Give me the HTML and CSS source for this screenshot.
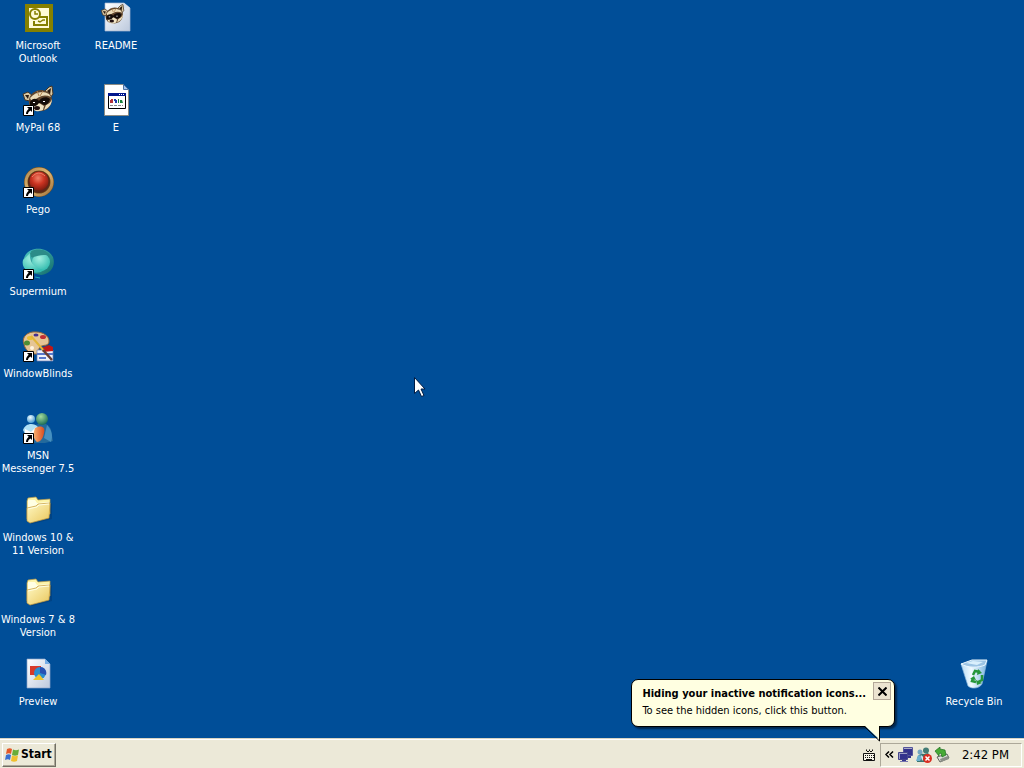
FILE: index.html
```html
<!DOCTYPE html>
<html lang="en">
<head>
<meta charset="utf-8">
<title>Desktop</title>
<link rel="stylesheet" href="styles.css">
</head>
<body>
<svg class="defs" aria-hidden="true">
  <defs>
    <linearGradient id="folder" x1="0" y1="0" x2="1" y2="1"><stop offset="0" stop-color="#fff9c4"/><stop offset="1" stop-color="#e9c65c"/></linearGradient>
    <linearGradient id="paper" x1="0" y1="0" x2="1" y2="1"><stop offset="0" stop-color="#fff"/><stop offset="1" stop-color="#bcc9dd"/></linearGradient>
    <radialGradient id="redball" cx=".45" cy=".35" r=".65"><stop offset="0" stop-color="#f08068"/><stop offset=".5" stop-color="#cc3422"/><stop offset="1" stop-color="#801c10"/></radialGradient>
    <linearGradient id="gold" x1="0" y1="0" x2="1" y2="1"><stop offset="0" stop-color="#b08850"/><stop offset=".5" stop-color="#e0b874"/><stop offset="1" stop-color="#a0703c"/></linearGradient>
    <linearGradient id="teal" x1="0" y1="0" x2="1" y2="1"><stop offset="0" stop-color="#4cc8c4"/><stop offset="1" stop-color="#136a68"/></linearGradient>
    <radialGradient id="aqua" cx=".4" cy=".3" r=".7"><stop offset="0" stop-color="#a4f0e0"/><stop offset="1" stop-color="#34bcb0"/></radialGradient>
    <radialGradient id="green" cx=".4" cy=".3" r=".7"><stop offset="0" stop-color="#a4dc9c"/><stop offset="1" stop-color="#1d6f58"/></radialGradient>
    <radialGradient id="sky" cx=".4" cy=".3" r=".7"><stop offset="0" stop-color="#f0fcff"/><stop offset="1" stop-color="#4c9cd0"/></radialGradient>
    <linearGradient id="orange" x1="0" y1="0" x2="1" y2="0"><stop offset="0" stop-color="#f8b070"/><stop offset="1" stop-color="#d84c20"/></linearGradient>
    <linearGradient id="bin" x1="0" y1="0" x2="1" y2="0"><stop offset="0" stop-color="#b8dcf4"/><stop offset=".4" stop-color="#f0faff"/><stop offset="1" stop-color="#7cb4e0"/></linearGradient>
    <symbol id="arrow" viewBox="0 0 11 11"><path fill="#fff" stroke="#000" d="M.5.5h10v10H.5z"/><path d="M4 2h5v5L7.500 5.500C6 6.500 5 7.500 5 9H3C3 7 4 5.500 5.700 3.800z"/></symbol>
    <symbol id="raccoon" viewBox="0 0 32 32">
      <path fill="#d8c8a4" stroke="#443424" d="M23 7 27 3l3-1 1 8-3 4zM1 10l5-2 5 4-3 5-5-1z"/>
      <path fill="#2c1c10" d="M25 7l4-3-1 7zM3 11l4 0-1 4z"/>
      <path fill="#60452c" d="M7 16C8 9 16 4 24 7c6 3 7 8 5 13-2 5-7 8-13 7C9 27 6 21 7 16z"/>
      <path fill="#ecdcb8" d="M8 14c5-6 13-8 19-4l2 3c-7-3-12-1-19 5zM24 21c3-1 5-3 6-6 0 5-3 9-8 11z"/>
      <path fill="#140c08" d="M8 18c2-4 7-4 9-1 2-4 8-5 11-2-1 4-3 6-6 6l-4-2c0 5-7 6-10 3z"/>
      <path fill="#f0e4c4" d="M9 22c3 1 6 0 8-3l5 3-1 4c-4 2-10 2-12-4z"/><ellipse cx="15" cy="24" rx="3" ry="2" fill="#201010"/>
      <path fill="#fff" d="M11 18h2v1h-2zm10-1h2v1h-2z"/><path stroke="#b08454" fill="none" d="M15 7l2 5M21 7l-3 5"/>
    </symbol>
    <symbol id="folder-icon" viewBox="0 0 32 32">
      <path fill="#02386f" opacity=".5" d="M6 28l4 2 20-5V9z"/>
      <path fill="#fdf4a8" stroke="#b89848" stroke-width=".7" d="M5 7l1-3 8-1 2 3 12-1v15L5 25z"/>
      <path fill="#ffffe4" d="M6 6h7l2 3 12-1v4L6 14z"/>
      <path fill="url(#folder)" stroke="#c49a3c" stroke-width=".7" d="M5 14l9-2 2-2 12-1-1 15-19 5-3-2z"/>
      <path stroke="#fffde0" fill="none" d="M6 15l9-2 2-2 10-1"/>
    </symbol>
  </defs>
</svg>

<main class="desktop">
  <div class="column">
    <a class="item" href="#"><svg class="icon" viewBox="0 0 32 32"><path fill="#858000" d="M3 2h28v28H3z"/><path fill="#fffbd8" d="M7 6h20v20H7z"/><path fill="#fffbd8" stroke="#858000" stroke-width="2" d="M14 15h11v8H12v-4"/><circle cx="13" cy="12" r="5" fill="#fffbd8" stroke="#858000" stroke-width="2"/><path d="M13 9v3h3M16 19l2 1 3-2h2" fill="none" stroke="#858000" stroke-width="1.500"/></svg><span class="label">Microsoft<br>Outlook</span></a>
    <a class="item" href="#"><svg class="icon" viewBox="0 0 32 32"><use href="#raccoon"/><use href="#arrow" x="1" y="21" width="11" height="11"/></svg><span class="label">MyPal 68</span></a>
    <a class="item" href="#"><svg class="icon" viewBox="0 0 32 32"><circle cx="17" cy="16" r="15" fill="#74501c"/><circle cx="17" cy="16" r="13" fill="none" stroke="url(#gold)" stroke-width="3"/><circle cx="17" cy="16" r="11" fill="#5c2818"/><circle cx="17" cy="15" r="9.500" fill="url(#redball)"/><path fill="none" stroke="#f7a080" opacity=".7" d="M10 11c4-5 9-5 13-1"/><use href="#arrow" x="1" y="21" width="11" height="11"/></svg><span class="label">Pego</span></a>
    <a class="item" href="#"><svg class="icon" viewBox="0 0 32 32"><path fill="url(#teal)" d="M2 10C6-2 25-2 31 9c3 9-2 17-12 18L6 24C1 20 0 14 2 10z"/><path fill="#2c8c88" d="M8 5c7-5 17-4 21 4-7 2-13 2-20 0z"/><circle cx="19" cy="14" r="9" fill="url(#aqua)"/><path fill="#2c8c88" d="M9 3c6-3 16-2 20 6-6-4-13-1-18 0z"/><path fill="url(#aqua)" d="M1 12l7-7c-1 8 3 15 14 17-5 4-11 3-16 1C1 20 0 16 1 12z"/><path fill="none" stroke="#1aa8b8" d="M13 29l5 1"/><use href="#arrow" x="1" y="21" width="11" height="11"/></svg><span class="label">Supermium</span></a>
    <a class="item" href="#"><svg class="icon" viewBox="0 0 32 32"><path fill="#e5c595" stroke="#9c6838" d="M2 14C-1 7 6 1 14 2c7 0 13 4 13 9 0 6-6 3-9 6s1 7-4 7C8 24 3 20 2 14z"/><ellipse cx="5" cy="13" rx="3" ry="2.500" fill="#4c8c34"/><ellipse cx="8" cy="8" rx="3" ry="2" fill="#e8be34"/><ellipse cx="14" cy="5" rx="2.500" ry="1.500" fill="#443090"/><ellipse cx="21" cy="7" rx="3" ry="2" fill="#c02e34"/><ellipse cx="10" cy="18" rx="2" ry="2" fill="#fff4e0"/><path fill="#eef2fa" stroke="#7080b0" stroke-width=".7" d="M15 20h16v11H15z"/><path fill="#5878cc" d="M15 23h16v2H15zm2 4h7v2h-7z"/><path fill="#c01818" d="M19 18l8-3 4 2v4l-10 1z"/><path stroke="#e1b638" stroke-width="2" d="M9 6l13 15"/><path stroke="#643e34" stroke-width="2.500" d="M21 20l9 10"/><use href="#arrow" x="1" y="21" width="11" height="11"/></svg><span class="label">WindowBlinds</span></a>
    <a class="item" href="#"><svg class="icon" viewBox="0 0 32 32"><path fill="#236a9c" d="M12 14c7-5 15-3 17 4l2 11-8 2H12z"/><path fill="#4590c2" d="M25 13c5 5 6 11 4 17l-7-4z"/><path fill="#b0e0f4" d="M1 18c2-7 11-8 15-3v12L4 24z"/><path fill="#fff" d="M3 17l6 3 5-5-3 11-8-3z"/><path fill="url(#orange)" d="M13 16c5-3 11-2 9 5-1 6-4 9-7 9-4-3-4-9-2-14z"/><circle cx="9" cy="7" r="4" fill="url(#sky)"/><circle cx="20" cy="7" r="6" fill="url(#green)"/><use href="#arrow" x="1" y="21" width="11" height="11"/></svg><span class="label">MSN<br>Messenger 7.5</span></a>
    <a class="item" href="#"><svg class="icon" viewBox="0 0 32 32"><use href="#folder-icon"/></svg><span class="label">Windows 10 &amp;<br>11 Version</span></a>
    <a class="item" href="#"><svg class="icon" viewBox="0 0 32 32"><use href="#folder-icon"/></svg><span class="label">Windows 7 &amp; 8<br>Version</span></a>
    <a class="item" href="#"><svg class="icon" viewBox="0 0 32 32"><path fill="url(#paper)" stroke="#8ba4c8" stroke-width=".7" d="M5 1h18l5 5v24H5z"/><path fill="#75aee8" d="M23 1v5h5z"/><path fill="#d83a28" d="M8 8h11v9H8z"/><circle cx="18" cy="15" r="6" fill="#2a8ed0"/><path fill="#2752b4" d="M18 9a6 6 0 0 1 6 8l-6-2z"/><path fill="#edc62f" d="M17 16l5 6H11z"/></svg><span class="label">Preview</span></a>
  </div>
  <div class="column">
    <a class="item" href="#"><svg class="icon" viewBox="0 0 32 32"><path fill="url(#paper)" stroke="#a8b8d0" stroke-width=".7" d="M5 1h19l6 5v23H5z"/><path fill="#d4dfef" d="M24 1v5h6z"/><use href="#raccoon" x="0" y="1" width="25" height="24"/></svg><span class="label">README</span></a>
    <a class="item" href="#"><svg class="icon" viewBox="0 0 32 32"><path fill="#fff" stroke="#8b8b84" d="M4.500.5h19l5 5v26h-24z"/><path fill="#a0c2f0" stroke="#4b72a4" d="M23.500.5v5h5z"/><path fill="#fff" stroke="#000" d="M8.500 9.500h17v15h-17z"/><path fill="#00168c" d="M8 9h18v3H8z"/><path fill="#fff" d="M19 10h1v1h-1zm2 0h1v1h-1zm2 0h1v1h-1z"/><path fill="#b43038" d="M11 15h2v4h-3v-3h1z"/><path fill="#203cac" d="M14 15h2v1h1v3h-2v-2h-1z"/><path fill="#17803c" d="M18 15h1v4h-1zm2 1h2l1 3h-3z"/><path stroke="#888" stroke-dasharray="3 1" d="M10 21.500h13"/></svg><span class="label">E</span></a>
  </div>
  <div class="column column-end">
    <a class="item" href="#"><svg class="icon" viewBox="0 0 32 32"><path fill="url(#bin)" stroke="#8cb8dc" stroke-width=".7" d="M3 6l26-3-5 23c-3 5-11 5-14 2z"/><path fill="#9cc4e4" stroke="#eaf7ff" d="M3 6l11-4 15 0-2 5c-7 3-17 3-24-1z"/><path fill="#d9effc" d="M8 5l7-2 10 1-6 3z"/><path fill="none" stroke="#26963a" stroke-width="2.500" d="M15 17l2-4 5 1M24 17l0 5-4 2M18 24l-4-1 1-3"/><path fill="#26963a" d="M20 11l4 4-5 2zM24 25l-5 2-1-5zM12 21l4-3 2 4z"/></svg><span class="label">Recycle Bin</span></a>
  </div>
  <svg class="cursor" viewBox="0 0 12 20" aria-hidden="true"><path fill="#fff" stroke="#001c44" d="M.5.500v16l4-3.500 3 6.500 2.500-1-3-6.500H11z"/></svg>
</main>

<footer class="taskbar">
  <button class="start" type="button"><svg class="flag" viewBox="0 0 16 16" aria-hidden="true"><path fill="#e45828" d="M3 2q3-1.500 5 0L7 7q-2-1.500-5 0z"/><path fill="#68ac38" d="M9 2.500q3 1.500 6 0L14 8q-3 1.500-6 0z"/><path fill="#3a70d0" d="M2 8q3-1.500 5 0l-1 5q-2-1.500-5 0z"/><path fill="#f0bf2e" d="M8 8.500q3 1.500 6 0L13 14q-3 1.500-6 0z"/></svg>Start</button>
  <svg class="keyboard" viewBox="0 0 14 14" aria-hidden="true"><path fill="none" stroke="#111" d="M4.500 3V1.500M5 3.500h2M7.500 3V1.500M8 3.500h2M10.500 3V1.500"/><path fill="#f6f4e8" stroke="#111" d="M1.500 5.500h11v7h-11z"/><path stroke="#111" stroke-dasharray="1 1" d="M3 7.500h9M3 9.500h9"/><path stroke="#111" d="M4 11.500h6"/></svg>
  <div class="tray">
    <button class="expand" type="button" aria-label="Show hidden icons"><svg viewBox="0 0 9 7"><path fill="none" stroke="#000" stroke-width="1.500" d="M4 .5l-3 3 3 3M8 .5l-3 3 3 3"/></svg></button>
    <svg class="tray-icon" viewBox="0 0 16 16"><path fill="#aaabc8" stroke="#55559c" d="M5.500.500h9v8h-9z"/><path fill="#34338c" d="M6 2h8v6H6zM8 9h5v2H8z"/><path fill="#9c9dc5" stroke="#45458c" d="M.5 5.500h9v7h-9z"/><path fill="#34338c" d="M2 7h7v5H2zM4 13h4v1H4z"/><path fill="#7776ae" d="M2 14h8v1H2z"/></svg>
    <svg class="tray-icon" viewBox="0 0 16 16"><path fill="#39756f" d="M1 13C1 9 4 6 8 7l4-1 3 4-4 5H1z"/><path fill="#6db0cf" d="M2 8l5 1-3 5H0z"/><path fill="#d9e9ed" d="M5 8l3 3-2 3z"/><circle cx="4" cy="5" r="2.500" fill="#75a7c0"/><circle cx="10" cy="3.500" r="3" fill="#427c75"/><circle cx="11.500" cy="11.500" r="4.500" fill="#d92e20"/><path stroke="#fff" stroke-width="1.500" d="M9.500 9.500l4 4m0-4l-4 4"/></svg>
    <svg class="tray-icon" viewBox="0 0 16 16"><path fill="#e0e1dc" stroke="#62665f" d="M3 10l10-3 2 4-9 4z"/><path fill="#8c9088" d="M6 12l8-3 1 3-8 3z"/><path fill="#47aa35" stroke="#1d6e20" stroke-width=".7" d="M1 4l5-4v2l5 1 1 5-4 2-1-4-2 1v2z"/></svg>
    <time class="clock">2:42 PM</time>
  </div>
  <section class="balloon">
    <div class="balloon-text">
      <h2 class="balloon-title">Hiding your inactive notification icons...</h2>
      <p class="balloon-message">To see the hidden icons, click this button.</p>
    </div>
    <button class="close" type="button" aria-label="Close"><svg viewBox="0 0 9 9"><path stroke="#000" stroke-width="2" d="M.5.500l8 8m0-8l-8 8"/></svg></button>
    <svg class="tail" viewBox="0 0 18 16" aria-hidden="true"><path fill="#ffffe1" d="M1 0h15v14z"/><path fill="none" stroke="#000" d="M1 1l14.500 14V0"/></svg>
  </section>
</footer>
</body>
</html>
```
FILE: styles.css
```css
* {
  box-sizing: border-box;
}

body {
  margin: 0;
  min-height: 100vh;
  display: flex;
  flex-direction: column;
  background: #004e98;
  font-family: Tahoma, "DejaVu Sans Condensed", "DejaVu Sans", sans-serif;
  font-size: 11px;
  line-height: 13px;
  color: #000;
}

button {
  font: inherit;
  color: inherit;
}

svg {
  display: block;
  flex: none;
}

.defs {
  position: absolute;
  width: 0;
  height: 0;
}

.desktop {
  flex: 1;
  display: flex;
  position: relative;
}

.column {
  width: 78px;
  display: grid;
  grid-auto-rows: 82px;
  align-content: start;
}

.column-end {
  margin-left: auto;
  margin-right: 10px;
  align-content: end;
}

.item {
  display: flex;
  flex-direction: column;
  align-items: center;
  gap: 5px;
  padding: 2px 2px 0 0;
  color: #fff;
  text-align: center;
  text-decoration: none;
}

.icon {
  width: 32px;
  height: 32px;
}

.label {
  white-space: nowrap;
}

.cursor {
  position: absolute;
  left: 414px;
  top: 377px;
  width: 12px;
  height: 20px;
}

.taskbar {
  position: relative;
  display: flex;
  align-items: center;
  height: 30px;
  padding: 2px 2px 0;
  background: #ece9d8;
  border-top: 1px solid #d8d4c4;
  box-shadow: inset 0 1px #fff;
}

.start {
  display: flex;
  align-items: center;
  gap: 1px;
  height: 24px;
  padding: 0 3px 0 1px;
  background: #ece9d8;
  border: 1px solid;
  border-color: #fff #716f64 #716f64 #fff;
  box-shadow: inset -1px -1px #aca899;
  font-size: 12px;
  font-weight: bold;
}

.flag {
  width: 16px;
  height: 16px;
}

.keyboard {
  width: 14px;
  height: 14px;
  margin-left: auto;
  margin-right: 4px;
}

.tray {
  display: flex;
  align-items: center;
  height: 24px;
  padding: 0 12px 0 4px;
  border: 1px solid;
  border-color: #aca899 #fff #fff #aca899;
}

.expand {
  padding: 0;
  margin-right: 4px;
  border: 0;
  background: none;
}

.expand svg {
  width: 9px;
  height: 7px;
}

.tray-icon {
  width: 16px;
  height: 16px;
  margin-right: 2px;
}

.clock {
  margin-left: 10px;
  font-size: 13px;
  white-space: nowrap;
}

.balloon {
  position: absolute;
  right: 129px;
  bottom: 41px;
  display: flex;
  gap: 7px;
  height: 48px;
  padding: 2px 3px 0 10px;
  background: #ffffe1;
  border: 1px solid #000;
  border-radius: 7px;
  box-shadow: 2px 2px 2px #00264c;
}

.balloon-text {
  padding-top: 5px;
  white-space: nowrap;
}

.balloon-title,
.balloon-message {
  margin: 0;
  font-size: 11px;
  line-height: 13px;
}

.balloon-message {
  margin-top: 4px;
}

.close {
  display: grid;
  place-items: center;
  width: 18px;
  height: 18px;
  padding: 0;
  background: #ece4d0;
  border: 1px solid #b4a898;
}

.close svg {
  width: 9px;
  height: 9px;
}

.tail {
  position: absolute;
  right: 12px;
  top: 46px;
  width: 18px;
  height: 16px;
}
```
